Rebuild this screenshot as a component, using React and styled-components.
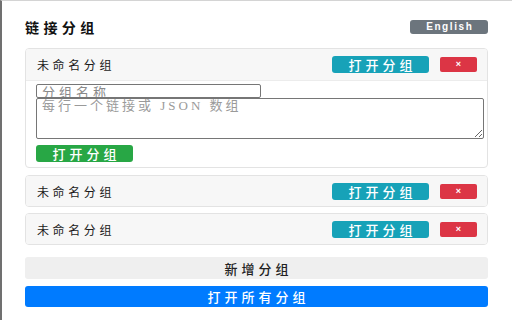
import React from "react";
import styled, { createGlobalStyle } from "styled-components";

const Global = createGlobalStyle`
  html, body { margin: 0; padding: 0; background: #fff; }
  body {
    font-family: "Noto Sans CJK SC", "Noto Sans", sans-serif;
    color: #222;
  }
  * { box-sizing: border-box; }
`;

const Page = styled.div`
  width: 512px;
  height: 320px;
  border-left: 2px solid #707070;
  border-top: 1px solid #d4d4d4;
  padding: 19px 24px 0 23px;
  display: flex;
  flex-direction: column;
  overflow: hidden;
`;

const TopBar = styled.div`
  display: flex;
  align-items: center;
  justify-content: space-between;
  height: 14px;
  margin-bottom: 14px;
`;

const Title = styled.h1`
  margin: 0;
  font-size: 14px;
  font-weight: 700;
  line-height: 14px;
  letter-spacing: 4.4px;
  color: #111;
`;

const LangButton = styled.button`
  width: 78px;
  height: 14px;
  border: none;
  border-radius: 3px;
  background: #6c757d;
  color: #fff;
  font-family: "Liberation Sans", Arial, sans-serif;
  font-weight: 700;
  font-size: 10px;
  letter-spacing: 1.6px;
  line-height: 14px;
  padding: 0 0 0 1.6px;
`;

const Card = styled.div`
  border: 1px solid #e3e3e3;
  border-radius: 4px;
  background: #fff;
  margin-bottom: ${p => p.$mb}px;
  overflow: hidden;
`;

const CardHeader = styled.div`
  display: flex;
  align-items: center;
  height: ${p => p.$h}px;
  padding: 0 10px 0 11px;
  background: #f7f7f7;
  ${p => p.$open ? "border-bottom: 1px solid #ececec;" : ""}
`;

const GroupName = styled.span`
  flex: 1;
  font-size: 12px;
  letter-spacing: 3.6px;
  color: #1a1a1a;
`;

const OpenButton = styled.button`
  width: 97px;
  height: 17px;
  border: none;
  border-radius: 3px;
  background: ${p => p.$color};
  color: #fff;
  font-family: "Noto Sans CJK SC", sans-serif;
  font-size: 13px;
  font-weight: 500;
  line-height: 17px;
  padding: 0 0 0 4px;
  letter-spacing: 4px;
`;

const DeleteButton = styled.button`
  width: 37px;
  height: 15px;
  margin-left: 11px;
  border: none;
  border-radius: 2px;
  background: #dc3545;
  color: #fff;
  font-family: "Liberation Sans", Arial, sans-serif;
  font-size: 9px;
  font-weight: 700;
  line-height: 15px;
  padding: 0;
`;

const CardBody = styled.div`
  padding: 3px 3px 5px 10px;
  display: flex;
  flex-direction: column;
  align-items: flex-start;
`;

const NameInput = styled.input`
  width: 225px;
  height: 14px;
  border: 1px solid #767676;
  border-radius: 2px;
  padding: 0 5px;
  font-family: "Noto Sans CJK SC", sans-serif;
  font-size: 13px;
  letter-spacing: 4px;
  line-height: 12px;
  outline: none;
  &::placeholder { color: #8a8a8a; }
`;

const LinksArea = styled.textarea`
  width: 448px;
  height: 41px;
  border: 1px solid #767676;
  border-radius: 2px;
  padding: 0 5px;
  font-family: "Liberation Serif", "Noto Sans CJK SC", serif;
  font-size: 13px;
  letter-spacing: 3px;
  line-height: 14px;
  resize: vertical;
  outline: none;
  &::placeholder { color: #9a9a9a; }
`;

const GreenButton = styled(OpenButton)`
  margin-top: 6px;
  background: #28a745;
`;

const WideButton = styled.button`
  width: 100%;
  height: ${p => p.$h}px;
  border: none;
  border-radius: 3px;
  background: ${p => p.$bg};
  color: ${p => p.$fg};
  font-family: "Noto Sans CJK SC", sans-serif;
  font-size: 13px;
  font-weight: 500;
  letter-spacing: 4px;
  padding: 0 0 0 4px;
  margin-bottom: ${p => p.$mb}px;
`;

const groups = [
  { name: "未命名分组", open: true },
  { name: "未命名分组", open: false },
  { name: "未命名分组", open: false },
];

export default function App() {
  return (
    <>
      <Global />
      <Page>
        <TopBar>
          <Title>链接分组</Title>
          <LangButton>English</LangButton>
        </TopBar>
        {groups.map((g, i) => (
          <Card key={i} $mb={i === 0 ? 7 : i === 1 ? 6 : 12}>
            <CardHeader $open={g.open} $h={g.open ? 32 : 30}>
              <GroupName>{g.name}</GroupName>
              <OpenButton $color="#17a2b8">打开分组</OpenButton>
              <DeleteButton>×</DeleteButton>
            </CardHeader>
            {g.open && (
              <CardBody>
                <NameInput placeholder="分组名称" />
                <LinksArea placeholder="每行一个链接或 JSON 数组" />
                <GreenButton>打开分组</GreenButton>
              </CardBody>
            )}
          </Card>
        ))}
        <WideButton $h={22} $bg="#efefef" $fg="#222" $mb={7}>新增分组</WideButton>
        <WideButton $h={21} $bg="#007bff" $fg="#fff" $mb={0}>打开所有分组</WideButton>
      </Page>
    </>
  );
}
